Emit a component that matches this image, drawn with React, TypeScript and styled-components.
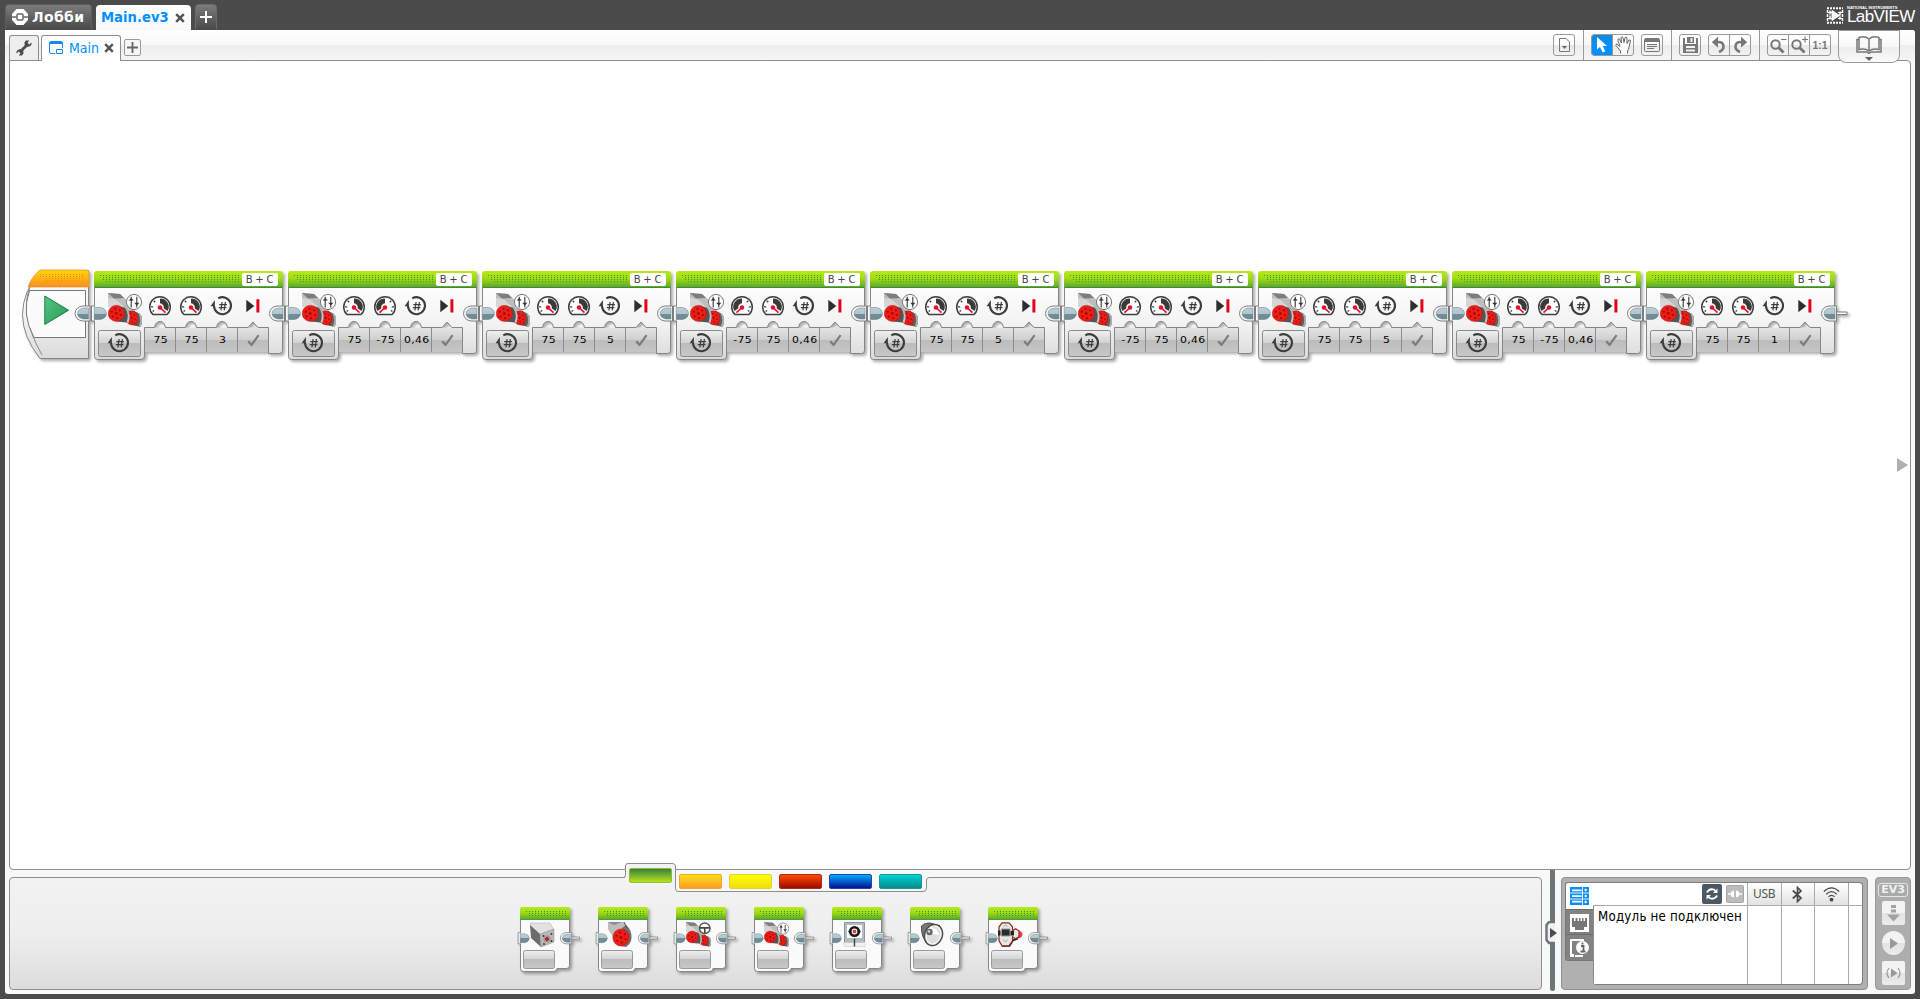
import React from 'react';
import styled, { createGlobalStyle, css } from 'styled-components';

const Global = createGlobalStyle`
  html, body { margin: 0; padding: 0; background: #4b4b4b; }
  body { overflow: hidden; font-family: "DejaVu Sans", Verdana, sans-serif; }
  * { box-sizing: border-box; }
  svg { display: block; flex: none; }
`;

const edge = '#8e8e8e';

/* ---------- window ---------- */

const Frame = styled.div`
  width: 1920px;
  height: 999px;
  padding: 0 5px 5px;
  background: #4b4b4b;
  display: flex;
  flex-direction: column;
`;

const TitleBar = styled.header`
  height: 30px;
  display: flex;
  align-items: flex-end;
`;

const LobbyTab = styled.div`
  width: 87px;
  height: 25px;
  margin-right: 4px;
  padding-left: 6px;
  display: flex;
  align-items: center;
  gap: 4px;
  margin-bottom: 1px;
  border: 1px solid #5e5e5e;
  border-bottom: 0;
  border-radius: 4px 4px 0 0;
  background: linear-gradient(#7b7b7b, #4a4a4a);
  color: #fff;
  font: bold 14px/24px "DejaVu Sans", sans-serif;
  letter-spacing: 0.35px;
  white-space: nowrap;
`;

const ProjectTab = styled.div`
  width: 95px;
  height: 25px;
  padding: 0 6px 0 5px;
  display: flex;
  align-items: center;
  justify-content: space-between;
  border-radius: 4px 4px 0 0;
  background: linear-gradient(#fff, #f8f8f8);
  color: #0090ff;
  font: bold 13.2px/24px "DejaVu Sans", sans-serif;
  white-space: nowrap;
`;

const NewProject = styled.div`
  width: 22px;
  height: 25px;
  margin: 0 0 1px 4px;
  display: grid;
  place-items: center;
  border: 1px solid #6a6a6a;
  border-bottom: 0;
  border-radius: 4px 4px 0 0;
  background: linear-gradient(#7b7b7b, #4a4a4a);
`;

const Brand = styled.div`
  margin-left: auto;
  display: flex;
  align-items: center;
  gap: 3px;
  height: 30px;
  padding-right: 1px;
  color: #fff;
`;

const BrandText = styled.div`
  width: 67px;
  display: flex;
  flex-direction: column;
  font-family: "Liberation Sans", Arial, sans-serif;
  white-space: nowrap;
`;

const BrandSmall = styled.span`
  font-size: 4px;
  line-height: 4px;
  font-weight: bold;
`;

const BrandLarge = styled.span`
  font-size: 17px;
  line-height: 14px;
  letter-spacing: -0.6px;
`;

const Shell = styled.main`
  flex: 1;
  padding: 0 4px;
  background: #f8f8f8;
  border-radius: 0 3px 3px 3px;
  display: flex;
  flex-direction: column;
`;

/* ---------- toolbar ---------- */

const Toolbar = styled.nav`
  height: 30px;
  margin: 0 -4px;
  padding: 0 4px;
  display: flex;
  align-items: flex-end;
  border-radius: 0 3px 0 0;
  background: linear-gradient(#fff 0, #f7f7f7 50%, #ededed 52%, #f5f5f5 100%);
`;

const ToolsTab = styled.div`
  width: 30px;
  height: 25px;
  margin-right: 2px;
  display: grid;
  place-items: center;
  border: 1px solid ${edge};
  border-bottom: 0;
  border-radius: 3px 3px 0 0;
  background: #eee;
`;

const ProgramTab = styled.div`
  position: relative;
  width: 80px;
  height: 26px;
  margin-bottom: -1px;
  padding: 0 6px 2px 7px;
  display: flex;
  align-items: center;
  border: 1px solid ${edge};
  border-bottom: 0;
  border-radius: 3px 3px 0 0;
  background: #fff;
  color: #0090ff;
  font: 14px/22px "DejaVu Sans Condensed", "DejaVu Sans", sans-serif;
  font-stretch: condensed;
  z-index: 1;
`;

const ProgramName = styled.span`
  margin: 0 5px 0 6px;
`;

const AddProgram = styled.div`
  width: 17px;
  height: 17px;
  margin: 0 auto 4px 3px;
  display: grid;
  place-items: center;
  border: 1px solid #9a9a9a;
  border-radius: 2px;
  background: #f6f6f6;
`;

const ToolSection = styled.div<{ $first?: boolean; $last?: boolean }>`
  height: 30px;
  padding: 4px ${(p) => (p.$last ? 7 : 8)}px 0 7px;
  display: flex;
  gap: 7px;
  ${(p) => !p.$first && css`border-left: 1px solid #999;`}
`;

const ButtonGroup = styled.div`
  height: 22px;
  display: flex;
  border: 1px solid #999;
  border-radius: 3px;
  background: linear-gradient(#fdfdfd 48%, #e9e9e9 52%, #f2f2f2);
  overflow: hidden;
`;

const ToolButton = styled.div<{ $active?: boolean; $w?: number }>`
  width: ${(p) => p.$w ?? 20}px;
  display: grid;
  place-items: center;
  color: #777;
  font: 10.5px/20px "Liberation Sans", Arial, sans-serif;
  font-weight: bold;
  & + & { border-left: 1px solid #999; }
  ${(p) => p.$active && css`background: linear-gradient(#1a85d8, #0090ff 40%);`}
`;

const HelpTab = styled.div`
  position: relative;
  width: 62px;
  height: 33px;
  margin: 0 11px -3px 0;
  padding-top: 5px;
  display: flex;
  flex-direction: column;
  align-items: center;
  gap: 3px;
  border: 1px solid #999;
  border-radius: 0 0 8px 8px;
  background: linear-gradient(#fff 0, #f7f7f7 50%, #ededed 52%, #fafafa 100%);
  z-index: 1;
`;

/* ---------- canvas ---------- */

const Canvas = styled.section`
  width: 1902px;
  height: 810px;
  border: 1px solid ${edge};
  border-radius: 0 4px 4px 4px;
  background: #fff;
  display: flex;
  align-items: center;
  justify-content: space-between;
`;

const Program = styled.div`
  display: flex;
  align-self: flex-start;
  padding: 210px 0 0 12px;
`;

const BlockBox = styled.article<{ $w: number; $h: number; $gap: number }>`
  position: relative;
  width: ${(p) => p.$w}px;
  height: ${(p) => p.$h}px;
  margin-right: ${(p) => p.$gap}px;
  flex: none;
`;

const Backdrop = styled.svg`
  position: absolute;
  left: -6px;
  top: -3px;
  overflow: visible;
  filter: drop-shadow(2px 2px 1.5px rgba(0, 0, 0, 0.33));
`;

const StartBox = styled(BlockBox)`
  padding: 24px 0 0 22px;
  & > svg:last-child { position: relative; }
`;

const Layer = styled.div`
  position: relative;
`;

const PortLine = styled(Layer)`
  height: 17px;
  padding: 2px 5px 0 0;
  display: flex;
  justify-content: flex-end;
`;

const PortLabel = styled.span`
  width: 36px;
  height: 13px;
  border-radius: 2px;
  background: #fff;
  color: #444;
  text-align: center;
  font: 10px/13px "DejaVu Sans", sans-serif;
  letter-spacing: 0.8px;
  word-spacing: -2px;
  white-space: nowrap;
`;

const IconLine = styled(Layer)`
  height: 40px;
  padding: 5px 0 0 14px;
  display: flex;
`;

const IconCell = styled.div`
  width: 31px;
  height: 26px;
  display: grid;
  place-items: center;
`;

const IconCells = styled.div`
  margin-left: 2.5px;
  display: flex;
`;

const ParamLine = styled(Layer)`
  height: 32px;
  display: flex;
`;

const ModeCell = styled.div`
  width: 50.5px;
  padding: 3px 0 0 13px;
`;

const Param = styled.div`
  width: 31px;
  height: 24px;
  display: grid;
  place-items: center;
  & > span {
    font: 9.5px/24px "DejaVu Sans", sans-serif;
    color: #000;
    transform: translateX(0.5px) scaleX(1.14);
    letter-spacing: 0.3px;
    white-space: nowrap;
  }
`;

const ScrollHint = styled.svg`
  margin-right: 2px;
`;

/* ---------- dock ---------- */

const Dock = styled.div`
  height: 124px;
  display: flex;
`;

const Palette = styled.section`
  position: relative;
  width: 1533px;
  height: 113px;
  margin-top: 7px;
  border: 1px solid ${edge};
  border-radius: 4px;
  background: linear-gradient(#f2f2f2, #eee 50%, #dcdcdc);
`;

const CategoryStrip = styled.div`
  position: absolute;
  left: 612px;
  top: -16px;
  width: 310px;
  height: 32px;
  padding: 6px 0 0 7px;
`;

const StripOutline = styled.svg`
  position: absolute;
  left: 0;
  top: 0;
`;

const Categories = styled.div`
  position: relative;
  display: flex;
  gap: 7px;
`;

const Swatch = styled.div<{ $from: string; $to: string; $line: string; $active?: boolean }>`
  width: 43px;
  height: 15px;
  margin-top: ${(p) => (p.$active ? 0 : 6)}px;
  border: 1px solid ${(p) => p.$line};
  border-radius: 2px;
  background: linear-gradient(${(p) => p.$from}, ${(p) => p.$to});
  ${(p) => p.$active && css`box-shadow: 0 1px 1px #fff;`}
`;

const PaletteRow = styled.div`
  display: flex;
  padding: 29px 0 0 510px;
`;

const MiniIcon = styled.div`
  position: relative;
  padding: 15px 0 0 10px;
`;

const Splitter = styled.div`
  position: relative;
  width: 5px;
  height: 121px;
  margin: 0 6px 0 8px;
  background: #6d7577;
  border-radius: 0 0 3px 3px;
`;

const SplitterGrip = styled.svg`
  position: absolute;
  left: -5px;
  top: 51px;
`;

const Hardware = styled.section`
  width: 307px;
  height: 113px;
  margin: 7px 7px 0 0;
  padding: 4px 0 0 3px;
  display: flex;
  border: 1px solid #909090;
  border-radius: 4px;
  background: #b0b0b0;
`;

const SideTabs = styled.div`
  width: 28px;
  height: 79px;
  display: flex;
  flex-direction: column;
  border: 1px solid #777;
  border-right: 0;
  border-radius: 3px 0 0 3px;
  overflow: hidden;
`;

const SideTab = styled.div<{ $active?: boolean }>`
  height: 26px;
  padding: 4px 0 0 4px;
  background: ${(p) => (p.$active ? '#fff' : '#828282')};
  & + & { border-top: 1px solid #6c6c6c; }
`;

const Table = styled.div`
  width: 270px;
  height: 103px;
  display: flex;
  flex-direction: column;
  border: 1px solid #7e7e7e;
  border-left: 0;
  border-radius: 0 4px 4px 3px;
  background: #fff;
  overflow: hidden;
`;

const Row = styled.div<{ $grow?: boolean }>`
  display: flex;
  flex: ${(p) => (p.$grow ? '1' : '0 0 23px')};
  border-left: ${(p) => (p.$grow ? '1px solid #8a8a8a' : '0')};
  ${(p) => !p.$grow && css`border-bottom: 1px solid #aaa; padding-left: 1px;`}
`;

const Cell = styled.div<{ $w?: number; $head?: boolean }>`
  width: ${(p) => p.$w ?? 34}px;
  display: flex;
  align-items: center;
  justify-content: center;
  border-left: 1px solid #aaa;
  ${(p) => p.$head && css`background: linear-gradient(#fff, #e2e2e2);`}
  font: 12px/22px "Noto Sans", sans-serif;
  letter-spacing: -0.3px;
  color: #555;
`;

const HeadTools = styled.div`
  width: 154px;
  display: flex;
  align-items: center;
  justify-content: flex-end;
  gap: 4px;
  padding-right: 3px;
`;

const Message = styled.div`
  width: 154px;
  padding: 2px 0 0 4px;
  color: #000;
  font: 13.2px/18px "DejaVu Sans Condensed", "DejaVu Sans", sans-serif;
  font-stretch: condensed;
  letter-spacing: 0.22px;
  white-space: nowrap;
`;

const BrickPanel = styled.section`
  width: 36px;
  height: 113px;
  margin-top: 7px;
  padding-top: 5px;
  display: flex;
  flex-direction: column;
  align-items: center;
  gap: 6px;
  border: 1px solid #999;
  border-radius: 4px;
  background: #adadad;
`;

const BrickLogo = styled.div`
  width: 30px;
  height: 14px;
  margin-bottom: -2px;
  border: 1px solid #e6e6e6;
  border-radius: 3px;
  background: #a6abac;
  color: #f2f2f2;
  text-align: center;
  font: bold 11px/12px "DejaVu Sans", sans-serif;
`;

const BrickButton = styled.div<{ $round?: boolean }>`
  width: 23px;
  height: 24px;
  display: grid;
  place-items: center;
  border-radius: ${(p) => (p.$round ? '50%' : '2px')};
  background: linear-gradient(#f3f3f3 48%, #e2e2e2 52%, #ececec);
`;

/* ---------- glyphs ---------- */

const Cross = ({ color }: { color: string }) => (
  <svg width="10" height="10" viewBox="0 0 10 10">
    <path d="M1.2 1.2 8.8 8.8M8.8 1.2 1.2 8.8" stroke={color} strokeWidth="2.5" />
  </svg>
);

const Plus = ({ color, size }: { color: string; size: number }) => (
  <svg width={size} height={size} viewBox="0 0 12 12">
    <path d="M6 0v12M0 6h12" stroke={color} strokeWidth="2" />
  </svg>
);

const ModeGlyph = () => (
  <svg width="24" height="24" viewBox="0 0 24 24" fill="none" stroke="#3c3c3c">
    <path d="M8.3 4.3A8.500 8.500 0 1 1 4 12" strokeWidth="2.1" />
    <path d="M.6 12.300 4.900 6v6.300z" fill="#3c3c3c" stroke="none" />
    <path d="M12.1 8 10.9 16.3M15.4 8 14.2 16.3M9.3 10.7h7.6M8.8 13.7h7.6" strokeWidth="1.2" />
  </svg>
);

const Gauge = ({ neg }: { neg?: boolean }) => (
  <svg width="24" height="24" viewBox="0 0 24 24" fill="none">
    <g transform={neg ? 'matrix(-1 0 0 1 24 0)' : undefined}>
      <path d="M5 20.500A10.300 10.300 0 1 1 19 20.500Z" stroke="#3f3f3f" strokeWidth="1.500" fill="#fff" />
      <path d="M12 4.400A8.400 8.400 0 0 1 19.600 17L15.800 14.400A4.500 4.500 0 0 0 12 9.200Z" fill="#3a3a3a" />
      <path d="M3 12.800h2.200M5.700 6.700l1.600 1.600M4.600 17.400l1.600-.9" stroke="#3f3f3f" strokeWidth="1.300" />
      <path d="M12 13.500 17.500 18.600" stroke="#e8102c" strokeWidth="1.700" />
      <circle cx="12" cy="13.500" r="2.300" fill="#e8102c" />
    </g>
  </svg>
);

const Brake = () => (
  <svg width="14" height="14" viewBox="0 0 14 14">
    <path d="M.3.8v12.4L8.3 7z" fill="#2e2e2e" />
    <path d="M10.4.3h3v13.2h-3z" fill="#e2001a" />
  </svg>
);

const Tick = () => (
  <svg width="13" height="13" viewBox="0 0 13 13">
    <path d="M1.2 7.4 4.6 10.8 11.6 1.2" stroke="#7c7c7c" strokeWidth="2.2" fill="none" />
  </svg>
);

const Sliders = () => (
  <>
    <circle cx="26" cy="9" r="7.6" fill="#fff" stroke="#777" strokeWidth="1" />
    <path d="M23.2 3.8v10.6M28.8 3.8v10.6" stroke="#333" strokeWidth="1.1" />
    <path d="M20.600 7.600h5.2l-2.6-2.6zM26.2 9.8h5.2l-2.6 2.800z" fill="#333" />
  </>
);

const Wheel = () => (
  <>
    <circle cx="25.5" cy="8.5" r="7.2" fill="#fff" stroke="#555" strokeWidth="1.9" />
    <path d="M18.5 8h14M25.5 9v6" stroke="#444" strokeWidth="2.2" />
  </>
);

const RedHub = ({ x, y, rx, ry }: { x: number; y: number; rx: number; ry: number }) => (
  <g>
    <ellipse cx={x} cy={y} rx={rx} ry={ry} fill="#ee1c16" stroke="#b01410" strokeWidth=".5" />
    <circle cx={x} cy={y} r={rx * 0.15} fill="#8a0806" />
    {[20, 80, 140, 200, 260, 320].map((a) => (
      <circle
        key={a}
        cx={x + Math.cos((a * Math.PI) / 180) * rx * 0.6}
        cy={y + Math.sin((a * Math.PI) / 180) * ry * 0.6}
        r={rx * 0.12}
        fill="#8a0a08"
      />
    ))}
  </g>
);

const Motors = ({ s = 34, badge = 'sliders' }: { s?: number; badge?: 'sliders' | 'wheel' }) => (
  <svg width={s} height={s} viewBox="0 0 34 34">
    <path d="M0 0 12 1 22 10 27 18 22 24 12 16 0 13z" fill="#bdbdbd" />
    <path d="M0 0 12 1 16 5 6 5.500z" fill="#7d7d7d" />
    <path d="M0 5 8 6.500 16 14 0 14z" fill="#d6d6d6" />
    <path d="M26 18 31.500 20.500Q36.500 26 32.500 33.800L23 32z" fill="#5f5f5f" />
    <path d="M30 19.800 31.500 20.500Q36.500 26 32.500 33.800L30.800 33.400Q34 26 30 19.800z" fill="#adadad" />
    <path d="M21 18.200H27Q31 23 28.500 32.300L21 31z" fill="#c81a14" />
    <RedHub x={23.600} y={24.800} rx={6.200} ry={6.900} />
    <path d="M9 12.500 18.500 15.200Q23.500 21 20.500 29.700L9 28.400z" fill="#555" />
    <path d="M17 14.800 18.500 15.200Q23.500 21 20.500 29.700L18.600 29.500Q21.500 21 17 14.800z" fill="#c4c4c4" />
    <RedHub x={8.300} y={20.400} rx={8.100} ry={8} />
    {badge === 'sliders' ? <Sliders /> : <Wheel />}
  </svg>
);

const LargeMotor = () => (
  <svg width="25" height="25" viewBox="0 0 25 25">
    <path d="M0 0h16l3 4-6 5-8 6L0 7z" fill="#bdbdbd" />
    <path d="M0 0 14 0 6 3z" fill="#8b8b8b" />
    <path d="M14 6 18 3Q24 8 23.5 16 23 22 18 25l-5-1z" fill="#707070" />
    <path d="M16 0l3 6" stroke="#555" />
    <RedHub x={13} y={15.5} rx={8.2} ry={8.6} />
  </svg>
);

const MediumMotor = () => (
  <svg width="25" height="25" viewBox="0 0 25 25">
    <path d="M0 1 20 1 24 8 10 13 0 4z" fill="#e2e2e2" stroke="#aaa" strokeWidth=".5" />
    <path d="M0 3 10 12 11 25 1 16z" fill="#6c6c6c" />
    <path d="M10 12 24 7 24 20 11 25z" fill="#b8b8b8" stroke="#888" strokeWidth=".5" />
    <circle cx="17" cy="17" r="3.6" fill="#999" />
    <path d="M17 15v4M15 17h4" stroke="#dc1414" strokeWidth="1.8" />
    <circle cx="13.5" cy="14" r=".9" fill="#333" />
    <circle cx="21.5" cy="12" r=".9" fill="#333" />
    <circle cx="14" cy="22" r=".9" fill="#333" />
    <circle cx="21.5" cy="19" r=".9" fill="#333" />
  </svg>
);

const Display = () => (
  <svg width="25" height="25" viewBox="0 0 25 25">
    <path d="M2.5.5h20v20h-20z" fill="#b5bcc3" stroke="#8d959c" />
    <path d="M5 3h15v13H5z" fill="#fff" />
    <path d="M2 20.5h21v4H2z" fill="#f1f1f1" stroke="#ccc" strokeWidth=".6" />
    <circle cx="12.5" cy="9.5" r="4.300" fill="none" stroke="#1a1a1a" strokeWidth="2.600" />
    <path d="M6.500 9.500h3M15.500 9.500h3" stroke="#1a1a1a" strokeWidth="2" />
    <path d="M10.800 7.800h3.400v3.400h-3.400z" fill="#f03c32" />
    <path d="M12.500 16.500v8" stroke="#444" strokeWidth="1.400" />
  </svg>
);

const Speaker = () => (
  <svg width="25" height="25" viewBox="0 0 25 25">
    <path d="M1.500 4Q5 .5 11 1.200L20 4 8 22Q1 16 1.500 4z" fill="#777" stroke="#4a4a4a" />
    <ellipse cx="13.500" cy="13" rx="8.800" ry="10.800" transform="rotate(20 13.500 13)" fill="#f6f6f6" stroke="#4a4a4a" strokeWidth="1.500" />
    <ellipse cx="13.500" cy="13" rx="6.400" ry="8.600" transform="rotate(20 13.500 13)" fill="#dedede" />
    <path d="M9 6Q17 4 19 13L12 12z" fill="#fff" />
    <circle cx="9.500" cy="10" r="3.200" fill="#666" />
    <circle cx="9.000" cy="9.400" r="1.300" fill="#ccc" />
  </svg>
);

const StatusLight = () => (
  <svg width="25" height="25" viewBox="0 0 25 25">
    <path d="M4 23.800h7.500l3.500-5.500 5-1.800" stroke="#222" strokeWidth="1.800" fill="none" />
    <path d="M19.500 8.500q5 .5 5 4t-5 4q1.500-4 0-8z" fill="#f5384c" />
    <path d="M4 .8h7l3.500 4v4l3-2 3.500 2v6l-3.500 2-3-2v4l-3.500 5H4l-3-5V5z" fill="#e6e6e6" stroke="#8c2a1c" strokeWidth="1.200" />
    <path d="M3.500 7h8.500v7H3.500z" fill="#2c2c2c" stroke="#999" />
    <path d="M0 8.500h2.500v5H0zM12.500 9h3.500v4.500h-3.500z" fill="#222" />
    <path d="M5.500 4.500l2-1.500 2 1.500M5.500 17.500 7.500 20l2-2.500" stroke="#aaa" fill="none" />
  </svg>
);

/* ---------- block outlines ---------- */

const HiddenDefs = styled.svg`
  position: absolute;
`;

const Defs = () => (
  <HiddenDefs width="0" height="0">
    <defs>
      <linearGradient id="green" x2="0" y2="1">
        <stop offset="0" stopColor="#b8ea1c" />
        <stop offset=".45" stopColor="#a0da14" />
        <stop offset="1" stopColor="#55a32f" />
      </linearGradient>
      <linearGradient id="orange" x2="0" y2="1">
        <stop offset="0" stopColor="#ffd60a" />
        <stop offset="1" stopColor="#ff8f1f" />
      </linearGradient>
      <linearGradient id="body" x2="0" y2="1">
        <stop offset="0" stopColor="#fdfdfd" />
        <stop offset=".5" stopColor="#f3f3f3" />
        <stop offset="1" stopColor="#dadada" />
      </linearGradient>
      <linearGradient id="well" x2="0" y2="1">
        <stop offset="0" stopColor="#e4e4e4" />
        <stop offset=".5" stopColor="#cfcfcf" />
        <stop offset=".52" stopColor="#bcbcbc" />
        <stop offset="1" stopColor="#c6c6c6" />
      </linearGradient>
      <linearGradient id="mode" x2="0" y2="1">
        <stop offset="0" stopColor="#f0f0f0" />
        <stop offset=".48" stopColor="#d2d2d2" />
        <stop offset=".5" stopColor="#bcbcbc" />
        <stop offset="1" stopColor="#c8c8c8" />
      </linearGradient>
      <linearGradient id="plug" x2="0" y2="1">
        <stop offset="0" stopColor="#bccdd5" />
        <stop offset=".5" stopColor="#b0c5cd" />
        <stop offset=".52" stopColor="#748e97" />
        <stop offset="1" stopColor="#6f8993" />
      </linearGradient>
      <linearGradient id="go" x2="1" y2="1">
        <stop offset="0" stopColor="#5cc48a" />
        <stop offset="1" stopColor="#1d9c4a" />
      </linearGradient>
      <pattern id="dots" width="3" height="2" patternUnits="userSpaceOnUse">
        <rect width="1" height="1" fill="#2a9a3a" />
      </pattern>
      <pattern id="dotsOrange" width="3" height="2" patternUnits="userSpaceOnUse">
        <rect width="1" height="1" fill="#dc9400" />
      </pattern>
    </defs>
  </HiddenDefs>
);

const OutPlug = ({ x, y, end, k = 1 }: { x: number; y: number; end?: boolean; k?: number }) => (
  <g transform={`translate(${x} ${y}) scale(${k})`}>
    {end && <path d="M14 6.500h12v2.600H14z" fill="#fff" stroke="#777" strokeWidth="1" />}
    <path d="M15.500 .5H8Q1 1.500 .5 8 1 14.500 8 15.500h7.500z" fill="#fbfbfb" stroke="#7d7d7d" />
    <path d="M14 2.500H9Q3.500 3.300 3 8q.5 4.700 6 5.500h5z" fill="url(#plug)" stroke="#647b84" strokeWidth=".5" />
  </g>
);

const InPlug = ({ y, k = 1 }: { y: number; k?: number }) => (
  <g transform={`translate(0 ${y}) scale(${k})`}>
    <path d="M1 .5h-3.500v15H1" fill="#fbfbfb" stroke="#7d7d7d" />
    <path d="M.2 2H6.500Q12 3 12.500 8 12 13 6.500 14H.2z" fill="url(#plug)" stroke="#647b84" strokeWidth=".5" />
  </g>
);

const MOVE_BODY =
  'M.5 16V85.500Q.5 88.500 3.500 88.500H47Q50.500 88.500 50.500 85V56.500H60.500Q61.500 50.500 66 50.500T71.500 56.500H91.500Q92.500 50.500 97 50.500T102.500 56.500H122.500Q123.500 50.500 128 50.500T133.500 56.500H154L159 51 164 56.500H174.500V82.500H185.500Q188.500 82.500 188.500 79.500V16z';

interface Move { left: string; right: string; turns: string }

const MoveBlock = ({ left, right, turns, last }: Move & { last?: boolean }) => (
  <BlockBox $w={189} $h={89} $gap={5}>
    <Backdrop width="200" height="98" viewBox="-6 -3 200 98">
      <path d="M50 56.500h125V81H50z" fill="url(#well)" />
      <path d="M81.500 57v24M112.500 57v24M143.500 57v24" stroke="#8c8c8c" />
      <path d={MOVE_BODY} fill="url(#body)" stroke="#858585" />
      <path d="M0 17V3Q0 0 3 0H186Q189 0 189 3V17z" fill="url(#green)" />
      <path d="M1 16.500H188" stroke="#3f8a3a" />
      <path d="M5 4h140v7H11V9H8V6H5z" fill="url(#dots)" />
      <rect x="4.500" y="59.500" width="42" height="26" rx="2" fill="url(#mode)" stroke="#8a8a8a" />
      <InPlug y={34.500} />
      <OutPlug x={175} y={34.500} end={last} />
    </Backdrop>
    <PortLine><PortLabel>B + C</PortLabel></PortLine>
    <IconLine>
      <Motors />
      <IconCells>
        <IconCell><Gauge neg={left.startsWith('-')} /></IconCell>
        <IconCell><Gauge neg={right.startsWith('-')} /></IconCell>
        <IconCell><ModeGlyph /></IconCell>
        <IconCell><Brake /></IconCell>
      </IconCells>
    </IconLine>
    <ParamLine>
      <ModeCell><ModeGlyph /></ModeCell>
      <Param><span>{left}</span></Param>
      <Param><span>{right}</span></Param>
      <Param><span>{turns}</span></Param>
      <Param><Tick /></Param>
    </ParamLine>
  </BlockBox>
);

const StartBlock = () => (
  <StartBox $w={67} $h={89} $gap={5}>
    <Backdrop width="80" height="98" viewBox="-6 -3 80 98">
      <g transform="translate(0 -1)">
        <path d="M18 .5H66.500V88.500H18Q-17 44.500 18 .5z" fill="url(#body)" stroke="#858585" />
        <path d="M8 17Q-3 44.500 20 85" fill="none" stroke="#8a8a8a" />
        <path d="M6 17Q10 6 18 0H64Q67 0 67 3V17z" fill="url(#orange)" stroke="#f08a2a" strokeWidth=".7" />
        <path d="M18 4h45v7H24V7h-6z" fill="url(#dotsOrange)" />
        <path d="M7.500 20.500H63.500V67.500H12Q-1 44 7.500 20.500z" fill="#fbfbfb" stroke="#777" />
      </g>
      <OutPlug x={52.500} y={34.500} />
    </Backdrop>
    <svg width="26" height="31" viewBox="0 0 26 31">
      <path d="M.8 1 24.500 15.200.8 29.500z" fill="url(#go)" stroke="#16803c" />
    </svg>
  </StartBox>
);

const MINI_BODY =
  'M.5 12V61.500Q.5 64.500 3.500 64.500H34Q36.500 64.500 37 61.500H46.500Q49.500 61.500 49.500 58.500V12z';

const MiniBlock = ({ children }: { children: React.ReactNode }) => (
  <BlockBox $w={50} $h={65} $gap={28}>
    <Backdrop width="66" height="74" viewBox="-6 -3 66 74">
      <path d={MINI_BODY} fill="#fafafa" stroke="#858585" />
      <path d="M0 13V2Q0 0 2 0H48Q50 0 50 2V13z" fill="url(#green)" />
      <path d="M.5 12.500H49.500" stroke="#4f9c40" />
      <path d="M4 4h42v5H7V6H4z" fill="url(#dots)" />
      <rect x="3.500" y="43.500" width="31" height="18" rx="2" fill="url(#mode)" stroke="#999" />
      <InPlug y={25.200} k={0.75} />
      <OutPlug x={40} y={25.200} k={0.75} end />
    </Backdrop>
    <MiniIcon>{children}</MiniIcon>
  </BlockBox>
);

const moves: Move[] = [
  { left: '75', right: '75', turns: '3' },
  { left: '75', right: '-75', turns: '0,46' },
  { left: '75', right: '75', turns: '5' },
  { left: '-75', right: '75', turns: '0,46' },
  { left: '75', right: '75', turns: '5' },
  { left: '-75', right: '75', turns: '0,46' },
  { left: '75', right: '75', turns: '5' },
  { left: '75', right: '-75', turns: '0,46' },
  { left: '75', right: '75', turns: '1' },
];

const Magnifier = ({ plus }: { plus?: boolean }) => (
  <svg width="18" height="18" viewBox="0 0 18 18" fill="none" stroke="#777">
    <circle cx="6.500" cy="8.500" r="4.200" strokeWidth="2" />
    <path d="M9.500 11.500 14.500 16.500" strokeWidth="2.800" />
    <path d={plus ? 'M12 3.500h6M15 .5v6' : 'M12 3.500h5.500'} strokeWidth="1.100" />
  </svg>
);

const Turn = ({ redo }: { redo?: boolean }) => (
  <svg width="16" height="18" viewBox="0 0 16 18">
    <g transform={redo ? 'matrix(-1 0 0 1 16 0)' : undefined}>
      <path d="M6 6Q12.500 5.500 12.500 10.500 12.500 14 8 16" stroke="#777" strokeWidth="2.600" fill="none" />
      <path d="M.8 6.200 7 .8v10.800z" fill="#777" />
    </g>
  </svg>
);

export default function App() {
  return (
    <Frame>
      <Global />
      <Defs />
      <TitleBar>
        <LobbyTab>
          <svg width="16" height="16" viewBox="0 0 16 16">
            <path d="M4.500 0h7L16 5v6l-4.500 5h-7L0 11V5z" fill="#fff" />
            <path d="M0 8h4.500M11.500 8H16" stroke="#666" strokeWidth="1.500" />
            <rect x="5" y="5" width="6" height="6" rx="1" fill="#fff" stroke="#666" strokeWidth="1.500" />
          </svg>
          Лобби
        </LobbyTab>
        <ProjectTab>
          Main.ev3
          <Cross color="#555" />
        </ProjectTab>
        <NewProject><Plus color="#fff" size={12} /></NewProject>
        <Brand>
          <svg width="18" height="17" viewBox="0 0 18 17" fill="none" stroke="#fff">
            <path d="M1 1.200h16M1 15.800h16" strokeWidth="2" strokeDasharray="2 1" />
            <path d="M1.500 3v11M16.500 3v11" strokeWidth="1.500" strokeDasharray="3 1" />
            <path d="M4 3.500v10M14 4.500v8" strokeWidth="1.500" strokeDasharray="4 1" />
            <path d="M2 5.500h4M2 11.500h4M12 5.500h4M12 11.500h4" strokeWidth="1" />
            <path d="M6 3.500 13.500 8.500 6 13.500z" fill="#fff" />
          </svg>
          <BrandText>
            <BrandSmall>NATIONAL INSTRUMENTS</BrandSmall>
            <BrandLarge>LabVIEW</BrandLarge>
          </BrandText>
        </Brand>
      </TitleBar>
      <Shell>
        <Toolbar>
          <ToolsTab>
            <svg width="16" height="16" viewBox="0 0 16 16">
              <path d="M4.200 11.800 11.500 4.500" stroke="#4c4c4c" strokeWidth="2.800" />
              <path d="M10 0.600A4 4 0 0 0 9 5.500 4 4 0 0 0 15.500 4.500V2.500L13.200 4.400 11.600 2.800 13.200 .6zM6 15.400A4 4 0 0 0 7 10.500 4 4 0 0 0 .5 11.500v2L2.800 11.600 4.400 13.200 2.800 15.400z" fill="#4c4c4c" />
            </svg>
          </ToolsTab>
          <ProgramTab>
            <svg width="14" height="13" viewBox="0 0 14 13" fill="none" stroke="#1e86f0">
              <path d="M6 12.500H2Q.5 12.500.5 11V2Q.5.500 2 .5H12Q13.500.5 13.500 2V7" />
              <path d="M.5 2H13.500" strokeWidth="2" />
              <path d="M7.500 8.500h6v4h-6z" fill="#fff" />
            </svg>
            <ProgramName>Main</ProgramName>
            <Cross color="#555" />
          </ProgramTab>
          <AddProgram><Plus color="#666" size={11} /></AddProgram>
          <ToolSection $first>
            <ButtonGroup>
              <ToolButton>
                <svg width="11" height="14" viewBox="0 0 11 14" fill="none" stroke="#777">
                  <path d="M.5.5h6.500l3.500 3.500v9.500H.5z" />
                  <path d="M3 8h5l-2.500 3z" fill="#666" stroke="none" />
                </svg>
              </ToolButton>
            </ButtonGroup>
          </ToolSection>
          <ToolSection>
            <ButtonGroup>
              <ToolButton $active>
                <svg width="12" height="16" viewBox="0 0 12 16">
                  <path d="M1 0v12.500L4 10l2.600 5.500 2.600-1.200L6.700 9H11z" fill="#fff" />
                </svg>
              </ToolButton>
              <ToolButton $w={21}>
                <svg width="17" height="18" viewBox="0 0 17 18" fill="#fff" stroke="#666">
                  <path d="M5.500 17.500V15L1 9.500Q.5 8 2 8l3 2.500L2.800 4Q3 2.300 4.500 3L6.500 7 6 1.500Q7 0 8 1.500L9 6.500 10 1.500Q11.500.5 12 2V7.500L14 4Q15.500 3.500 15.500 5L14 11Q13.500 14 12.500 15V17.500" />
                </svg>
              </ToolButton>
            </ButtonGroup>
            <ButtonGroup>
              <ToolButton>
                <svg width="16" height="14" viewBox="0 0 16 14" fill="none" stroke="#777">
                  <rect x=".5" y=".5" width="15" height="13" rx="1" />
                  <path d="M1 2.500h14" strokeWidth="3" />
                  <path d="M3 6.500h10M3 8.500h10M3 10.500h7" />
                </svg>
              </ToolButton>
            </ButtonGroup>
          </ToolSection>
          <ToolSection>
            <ButtonGroup>
              <ToolButton>
                <svg width="15" height="16" viewBox="0 0 15 16">
                  <path d="M0 1h2v6h11V1h2v15H0z" fill="#777" />
                  <path d="M4 0h7v6H4z" fill="#777" />
                  <path d="M7.500 1h2v4h-2zM3 9h9v2H3zM3 12.500h9v2H3z" fill="#f2f2f2" />
                </svg>
              </ToolButton>
            </ButtonGroup>
            <ButtonGroup>
              <ToolButton><Turn /></ToolButton>
              <ToolButton $w={21}><Turn redo /></ToolButton>
            </ButtonGroup>
          </ToolSection>
          <ToolSection $last>
            <ButtonGroup>
              <ToolButton><Magnifier /></ToolButton>
              <ToolButton $w={21}><Magnifier plus /></ToolButton>
              <ToolButton $w={21}>1:1</ToolButton>
            </ButtonGroup>
          </ToolSection>
          <HelpTab>
            <svg width="26" height="18" viewBox="0 0 26 18" fill="none" stroke="#777" strokeWidth="1.500">
              <path d="M13 3Q9-.5 3 1.500V13.500Q9 12 13 15 17 12 23 13.500V1.500Q17-.5 13 3V15" />
              <path d="M3 3.500H1V16H11L13 17.300 15 16H25V3.500H23" />
            </svg>
            <svg width="8" height="4" viewBox="0 0 8 4"><path d="M0 0h8L4 4z" fill="#666" /></svg>
          </HelpTab>
        </Toolbar>
        <Canvas>
          <Program>
            <StartBlock />
            {moves.map((m, i) => (
              <MoveBlock key={i} {...m} last={i === moves.length - 1} />
            ))}
          </Program>
          <ScrollHint width="11" height="14" viewBox="0 0 11 14">
            <path d="M0 0v14l11-7z" fill="#b0b0b0" />
          </ScrollHint>
        </Canvas>
        <Dock>
          <Palette>
            <PaletteRow>
              <MiniBlock><MediumMotor /></MiniBlock>
              <MiniBlock><LargeMotor /></MiniBlock>
              <MiniBlock><Motors s={25} badge="wheel" /></MiniBlock>
              <MiniBlock><Motors s={25} /></MiniBlock>
              <MiniBlock><Display /></MiniBlock>
              <MiniBlock><Speaker /></MiniBlock>
              <MiniBlock><StatusLight /></MiniBlock>
            </PaletteRow>
            <CategoryStrip>
              <StripOutline width="310" height="32" viewBox="0 0 310 32">
                <path d="M3 17V4Q3 1.500 6 1.500H50Q53 1.500 53 4V17z" fill="#f2f2f2" />
                <path d="M53 14H307V16L304.500 18V26Q304.500 29.500 301 29.500H56Q53 29.500 53 26z" fill="#f8f8f8" />
                <path d="M0 15.500H1Q3.500 15.500 3.500 13V4Q3.500 1.500 6 1.500H50Q53.500 1.500 53.500 4V26Q53.500 29.500 56 29.500H301Q304.500 29.500 304.500 26V18Q304.500 15.500 307.500 15.500H310" fill="none" stroke={edge} />
              </StripOutline>
              <Categories>
                <Swatch $active $from="#3a7f3c" $to="#b6e21e" $line="#8cc02a" />
                <Swatch $from="#ffe014" $to="#ff9a28" $line="#f5a623" />
                <Swatch $from="#ffff00" $to="#f0dc14" $line="#e8d030" />
                <Swatch $from="#ff4a00" $to="#9c0a00" $line="#a83010" />
                <Swatch $from="#00aaff" $to="#0a1090" $line="#1848a8" />
                <Swatch $from="#00d2d2" $to="#068a8a" $line="#109a9a" />
              </Categories>
            </CategoryStrip>
          </Palette>
          <Splitter>
            <SplitterGrip width="13" height="24" viewBox="0 0 13 24">
              <path d="M10 1H4L1.500 4V19L4 22h6" fill="#f0f0f0" stroke="#6d7577" strokeWidth="2.400" />
              <path d="M5 7v10l7-5z" fill="#4c4c4c" />
            </SplitterGrip>
          </Splitter>
          <Hardware>
            <SideTabs>
              <SideTab $active>
                <svg width="19" height="18" viewBox="0 0 19 18">
                  <path d="M0 0h19v18H0z" fill="#0a8cf5" />
                  <path d="M2 2.500h9.500v1.800H2zM2 8.200h9.500V10H2zM2 13.800h9.500v1.800H2z" fill="#fff" />
                  <path d="M12.500 0v18M0 6h19M0 12h19" stroke="#fff" strokeWidth=".9" />
                  <circle cx="15.700" cy="3" r="1.200" fill="#fff" /><circle cx="15.700" cy="9" r="1.200" fill="#fff" /><circle cx="15.700" cy="15" r="1.200" fill="#fff" />
                </svg>
              </SideTab>
              <SideTab>
                <svg width="19" height="18" viewBox="0 0 19 18">
                  <path d="M0 0h19v18H0z" fill="#fff" />
                  <path d="M2 4h2v3h1.500V4h2v3H9V4h1.500v3H12V4h1.500v3H15V4h2v9h-3v3H5v-3H2z" fill="#777" />
                </svg>
              </SideTab>
              <SideTab>
                <svg width="19" height="18" viewBox="0 0 19 18">
                  <path d="M0 0h14v2H2v13h2v3H0zM5 16h8v2H5z" fill="#fff" />
                  <circle cx="12.500" cy="8.500" r="6.500" fill="#fff" />
                  <path d="M11 7h2.500v5.500M10.500 12.500h5M12.500 3.500v2" stroke="#666" strokeWidth="1.800" fill="none" />
                </svg>
              </SideTab>
            </SideTabs>
            <Table>
              <Row>
                <HeadTools>
                  <svg width="20" height="20" viewBox="0 0 20 20">
                    <rect width="20" height="20" rx="2" fill="#4b5866" />
                    <path d="M5 8.500Q6.300 5.300 10 5.300q2 0 3.500 1.500M15 11.500Q13.700 14.700 10 14.700q-2 0-3.500-1.500" stroke="#fff" strokeWidth="1.900" fill="none" />
                    <path d="M15.500 4.500v4.500H11zM4.500 15.500V11H9z" fill="#fff" />
                  </svg>
                  <svg width="18" height="18" viewBox="0 0 18 18">
                    <rect x=".5" y=".5" width="17" height="17" rx="1" fill="#bcbcbc" stroke="#a6a6a6" />
                    <path d="M2 9h2.500M13.500 9H16" stroke="#fff" strokeWidth="1.400" />
                    <path d="M4.500 9q0-3 3.500-3.500v7Q4.500 12 4.500 9zM13.500 9q0-3-3.500-3.500v7Q13.500 12 13.500 9z" fill="#fff" />
                  </svg>
                </HeadTools>
                <Cell $head>USB</Cell>
                <Cell $head>
                  <svg width="11" height="17" viewBox="0 0 11 17">
                    <path d="M.8 4.500 9 12 5.500 15.500V1.500L9 5 .8 12.500" stroke="#4a4a4a" strokeWidth="1.700" fill="none" />
                  </svg>
                </Cell>
                <Cell $head>
                  <svg width="17" height="15" viewBox="0 0 17 15" fill="none" stroke="#4a4a4a" strokeWidth="1.200">
                    <path d="M.8 4.500Q8.500-2.700 16.200 4.500M3.200 7.200Q8.500 2.200 13.800 7.200M5.500 9.800Q8.500 7 11.500 9.800" />
                    <circle cx="8.500" cy="12.700" r="1.900" fill="#4a4a4a" stroke="none" />
                  </svg>
                </Cell>
                <Cell $w={14} />
              </Row>
              <Row $grow>
                <Message>Модуль не подключен</Message>
                <Cell /><Cell /><Cell /><Cell $w={14} />
              </Row>
            </Table>
          </Hardware>
          <BrickPanel>
            <BrickLogo>EV3</BrickLogo>
            <BrickButton>
              <svg width="13" height="17" viewBox="0 0 13 17">
                <path d="M4 0h5v3H4zM4 4.500h5v3H4zM0 9.500h13L6.500 16.500z" fill="#a2a2a2" />
              </svg>
            </BrickButton>
            <BrickButton $round>
              <svg width="9" height="11" viewBox="0 0 9 11"><path d="M1 0v11l8-5.500z" fill="#999" /></svg>
            </BrickButton>
            <BrickButton>
              <svg width="15" height="12" viewBox="0 0 15 12">
                <path d="M3 1Q-1 6 3 11M12 1Q16 6 12 11" stroke="#999" strokeWidth="1.200" fill="none" />
                <path d="M5 1.500v9L11.500 6z" fill="#999" />
              </svg>
            </BrickButton>
          </BrickPanel>
        </Dock>
      </Shell>
    </Frame>
  );
}
